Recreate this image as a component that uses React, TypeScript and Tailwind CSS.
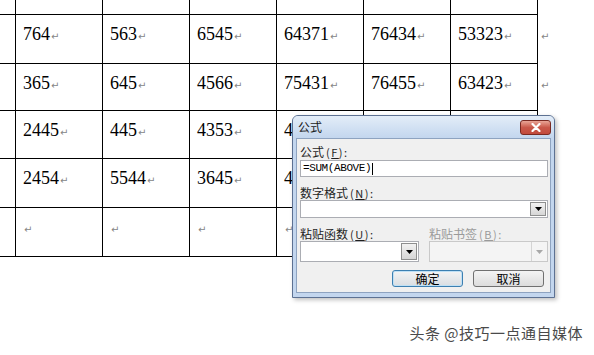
import React from 'react';

// cells hidden under the dialog are left blank
const ROWS: { h: string; cells: string[]; end: boolean }[] = [
  { h: 'h-[49px]', cells: ['764', '563', '6545', '64371', '76434', '53323'], end: true },
  { h: 'h-[47px]', cells: ['365', '645', '4566', '75431', '76455', '63423'], end: true },
  { h: 'h-[48px]', cells: ['2445', '445', '4353', '4', '', ''], end: false },
  { h: 'h-[49px]', cells: ['2454', '5544', '3645', '4', '', ''], end: false },
  { h: 'h-[49px]', cells: ['', '', '', '', '', ''], end: false },
];

function Mark() {
  return (
    <span className="ml-[1px] inline-block text-[10px] leading-none text-[#858585] [font-family:'DejaVu_Sans',sans-serif]">
      ↵
    </span>
  );
}

function DropArrow({ disabled }: { disabled?: boolean }) {
  return (
    <div
      className={
        disabled
          ? 'flex h-full w-[16px] items-center justify-center border-l border-[#d4d4d4] bg-[#f4f4f4]'
          : 'flex h-full w-[16px] items-center justify-center border border-[#8e8f8f] bg-gradient-to-b from-[#f2f2f2] to-[#d6d6d6]'
      }
    >
      <svg width="7" height="4" viewBox="0 0 7 4">
        <path d="M0 0h7L3.5 4z" fill={disabled ? '#a8a8a8' : '#000'} />
      </svg>
    </div>
  );
}

function Label({ text, hot, disabled }: { text: string; hot: string; disabled?: boolean }) {
  return (
    <div
      className={`h-[14px] whitespace-nowrap text-[12px] leading-[14px] ${disabled ? 'text-[#9a9a9a]' : 'text-[#1e1e1e]'}`}
    >
      {text}
      <span className="ml-[2px] text-[11px] tracking-[1.5px]">
        (<span className="underline">{hot}</span>):
      </span>
    </div>
  );
}

function FormulaDialog() {
  return (
    <div className="absolute left-[292px] top-[115px] flex h-[183px] w-[263px] flex-col rounded-t-[6px] border border-[#5d7192] bg-[#c3d6ee] [font-family:'Noto_Sans_CJK_SC','Liberation_Sans',sans-serif] shadow-[2px_2px_4px_rgba(0,0,0,0.25)]">
      <div className="flex h-[22px] shrink-0 items-center justify-between rounded-t-[5px] bg-gradient-to-b from-[#e3edf8] to-[#c3d6ee] pl-[5px] pr-[3px]">
        <span className="text-[12px] text-[#1b1b1b]">公式</span>
        <div className="flex h-[15px] w-[31px] items-center justify-center rounded-[3px] border border-[#7a2a22] bg-gradient-to-b from-[#e8a597] via-[#c9584a] to-[#c24a3c]">
          <svg width="10" height="9" viewBox="0 0 10 9">
            <path d="M1.5 1l7 7M8.5 1l-7 7" stroke="#fff" strokeWidth="2.2" strokeLinecap="round" />
          </svg>
        </div>
      </div>
      <div className="mx-[3px] mb-[4px] flex flex-1 flex-col border border-[#8ea3c0] bg-[#f0f0f0] pl-[3px] pr-[2px]">
        <div className="mt-[6px]">
          <Label text="公式" hot="F" />
        </div>
        <div className="mt-[1px] flex h-[17px] items-center border border-[#abadb3] bg-white pl-[2px] text-[11px] text-black [font-family:'Liberation_Mono',monospace] tracking-[-0.4px]">
          =SUM(ABOVE)<span className="ml-[1px] inline-block h-[12px] w-[1px] bg-black" />
        </div>
        <div className="mt-[9px]">
          <Label text="数字格式" hot="N" />
        </div>
        <div className="flex h-[18px] justify-end border border-[#abadb3] bg-white p-[1px]">
          <DropArrow />
        </div>
        <div className="mt-[9px] grid grid-cols-2 gap-x-[10px]">
          <Label text="粘贴函数" hot="U" />
          <Label text="粘贴书签" hot="B" disabled />
          <div className="flex h-[21px] justify-end border border-[#abadb3] bg-white p-[1px]">
            <DropArrow />
          </div>
          <div className="flex h-[21px] justify-end border border-[#c9c9c9] bg-[#f4f4f4]">
            <DropArrow disabled />
          </div>
        </div>
        <div className="mt-[8px] flex justify-end gap-[10px] pr-[4px]">
          <button className="flex h-[17px] w-[71px] items-center justify-center rounded-[3px] border border-[#3c7fb1] bg-gradient-to-b from-[#f4f4f4] to-[#d9dde2] text-[12px] leading-none text-black shadow-[inset_0_0_0_1px_#bfe0f5]">
            确定
          </button>
          <button className="flex h-[17px] w-[71px] items-center justify-center rounded-[3px] border border-[#707070] bg-gradient-to-b from-[#f4f4f4] to-[#dcdcdc] text-[12px] leading-none text-black">
            取消
          </button>
        </div>
      </div>
    </div>
  );
}

export default function App() {
  return (
    <div className="relative h-[355px] w-[594px] overflow-hidden bg-white">
      <div className="flex flex-col [font-family:'Liberation_Serif',serif] text-[18px] text-black">
        <div className="flex h-[15px]">
          <div className="w-[16px] border-b border-r border-black" />
          {[0, 1, 2, 3, 4, 5].map((i) => (
            <div key={i} className="w-[87px] border-b border-r border-black" />
          ))}
        </div>
        {ROWS.map((row, r) => (
          <div key={r} className={`flex ${row.h}`}>
            <div className="w-[16px] border-b border-r border-black" />
            {row.cells.map((c, i) => {
              const hidden = r >= 2 && i >= 4;
              return (
                <div key={i} className="w-[87px] border-b border-r border-black pl-[7px] pt-[9px] leading-[20px]">
                  {c}
                  {!hidden && !(r >= 2 && i === 3 && c !== '') && <Mark />}
                </div>
              );
            })}
            {row.end && (
              <div className="pl-[2px] pt-[9px] leading-[20px]">
                <Mark />
              </div>
            )}
          </div>
        ))}
      </div>
      <div className="mt-[66px] flex justify-end pr-[11px]">
        <span className="text-[15px] leading-[20px] tracking-[0.5px] text-[#4a4a4a] [font-family:'Noto_Sans_CJK_SC',sans-serif]">
          头条 @技巧一点通自媒体
        </span>
      </div>
      <FormulaDialog />
    </div>
  );
}
